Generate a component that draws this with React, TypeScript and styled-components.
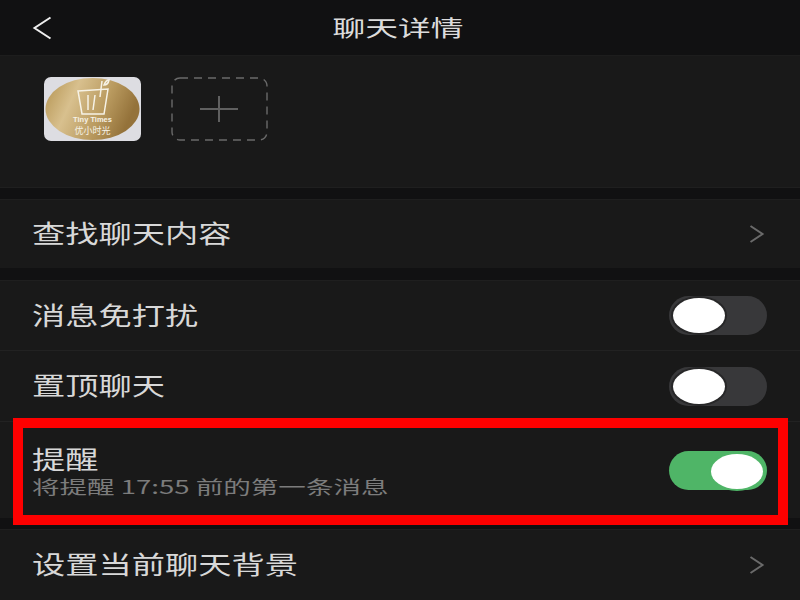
import React from "react";
import styled, { createGlobalStyle } from "styled-components";

const Global = createGlobalStyle`
  html, body { margin: 0; padding: 0; background: #111112; }
  body { font-family: "Liberation Sans", "Noto Sans CJK SC", sans-serif; }
`;

const Page = styled.div`
  position: relative;
  width: 800px;
  height: 600px;
  overflow: hidden;
  background: #111112;
  display: flex;
  flex-direction: column;
`;

const Header = styled.header`
  height: 55px;
  flex: none;
  position: relative;
  display: flex;
  align-items: center;
  justify-content: center;
  border-bottom: 1px solid #1d1d1d;
`;

const BackIcon = styled.svg`
  position: absolute;
  left: 31px;
  top: 15px;
`;

const Title = styled.h1`
  margin: 0 4px 0 0;
  padding-bottom: 3px;
  font: 400 22px "Noto Sans CJK SC", sans-serif;
  color: #dcdcdc;
  transform: scaleX(1.49);
`;

const MembersSection = styled.section`
  height: 132px;
  flex: none;
  background: #191919;
  border-bottom: 1px solid #1f1f1f;
  box-sizing: border-box;
  padding: 21px 0 0 44px;
  display: flex;
  gap: 30px;
  align-items: flex-start;
`;

const Avatar = styled.svg`
  display: block;
  border-radius: 7px;
`;

const Group = styled.section<{ $gap: number }>`
  flex: none;
  margin-top: ${(p) => p.$gap}px;
  background: #191919;
  border-top: 1px solid #1f1f1f;
`;

const Row = styled.div<{ $h: number; $line?: boolean }>`
  height: ${(p) => p.$h}px;
  box-sizing: border-box;
  padding: 0 33px 0 32px;
  display: flex;
  align-items: center;
  justify-content: space-between;
  border-bottom: ${(p) => (p.$line ? "1px solid #222" : "none")};
`;

const TextStack = styled.div`
  display: flex;
  flex-direction: column;
  align-items: flex-start;
`;

const Label = styled.span`
  font: 400 25px/32px "Noto Sans CJK SC", sans-serif;
  padding-bottom: 4px;
  color: #d8d8d8;
  display: inline-block;
  transform: scaleX(1.33);
  transform-origin: left center;
  white-space: nowrap;
`;

const Sub = styled.span`
  font: 400 18px/24px "Noto Sans CJK SC", sans-serif;
  margin-top: -4px;
  color: #7c7c7c;
  display: inline-block;
  transform: scaleX(1.53);
  transform-origin: left center;
  white-space: nowrap;
`;

const Track = styled.div<{ $on?: boolean }>`
  width: 98px;
  height: 39px;
  border-radius: 20px;
  background: ${(p) => (p.$on ? "#4fb567" : "#38383a")};
  position: relative;
`;

const Knob = styled.div<{ $on?: boolean }>`
  position: absolute;
  top: ${(p) => (p.$on ? "3px" : "2px")};
  left: ${(p) => (p.$on ? "42px" : "4px")};
  width: 52px;
  height: 35px;
  border-radius: 50%;
  background: #fff;
  box-shadow: 0 0 0 2px ${(p) => (p.$on ? "#4fb567" : "#272728")};
`;

const Highlight = styled.div`
  position: absolute;
  left: 13px;
  top: 418px;
  width: 775px;
  height: 107px;
  box-sizing: border-box;
  border: 10px solid #fe0000;
  pointer-events: none;
`;

const Chevron = () => (
  <svg width="18" height="20" viewBox="0 0 18 20" fill="none" style={{ marginRight: 1 }}>
    <path d="M2.5 2 L14.5 10 L2.5 18" stroke="#6a6a6a" strokeWidth="2" />
  </svg>
);

const Toggle = ({ on }: { on?: boolean }) => (
  <Track $on={on}>
    <Knob $on={on} />
  </Track>
);

export default function App() {
  return (
    <Page>
      <Global />
      <Header>
        <BackIcon width="24" height="26" viewBox="0 0 24 26" fill="none">
          <path d="M19.5 2.5 L3.5 13 L19.5 23.5" stroke="#eeeeee" strokeWidth="2" />
        </BackIcon>
        <Title>聊天详情</Title>
      </Header>
      <MembersSection>
        <Avatar width="97" height="64" viewBox="0 0 97 64">
          <defs>
            <linearGradient id="gold" x1="0" y1="0" x2="1" y2="0.3">
              <stop offset="0" stopColor="#b3924f" />
              <stop offset="0.35" stopColor="#d8c08e" />
              <stop offset="0.7" stopColor="#b99a5f" />
              <stop offset="1" stopColor="#94723a" />
            </linearGradient>
          </defs>
          <rect width="97" height="64" fill="#dddde2" />
          <ellipse cx="48.5" cy="32" rx="47" ry="31" fill="url(#gold)" />
          <g fill="none" stroke="#f6f2e6" strokeWidth="1.5">
            <path d="M34 14 L64 12 L60 37 L38 37 Z" />
            <path d="M44 18 L44 33 M51 18 L49 33" />
            <path d="M56 20 L58 4" />
            <path d="M60 8 Q62 3 65 3 Q64 8 60 8 Z" />
          </g>
          <text x="48.5" y="45" textAnchor="middle" fontFamily="Liberation Sans" fontSize="7.5" fontWeight="700" fill="#f6f2e6">Tiny Times</text>
          <text x="48.5" y="56.5" textAnchor="middle" fontFamily="Noto Sans CJK SC" fontSize="9" fill="#f6f2e6">优小时光</text>
        </Avatar>
        <svg width="97" height="64" viewBox="0 0 97 64" fill="none">
          <rect x="1" y="1" width="95" height="62" rx="8" stroke="#6a6a6a" strokeWidth="1.4" strokeDasharray="8 6" />
          <path d="M29 32 H67 M48 19 V45" stroke="#606060" strokeWidth="2" />
        </svg>
      </MembersSection>
      <Group $gap={11}>
        <Row $h={68}>
          <Label>查找聊天内容</Label>
          <Chevron />
        </Row>
      </Group>
      <Group $gap={12}>
        <Row $h={70} $line>
          <Label>消息免打扰</Label>
          <Toggle />
        </Row>
        <Row $h={71} $line>
          <Label>置顶聊天</Label>
          <Toggle />
        </Row>
        <Row $h={96}>
          <TextStack>
            <Label>提醒</Label>
            <Sub>将提醒 17:55 前的第一条消息</Sub>
          </TextStack>
          <Toggle on />
        </Row>
      </Group>
      <Group $gap={11}>
        <Row $h={70}>
          <Label>设置当前聊天背景</Label>
          <Chevron />
        </Row>
      </Group>
      <Highlight />
    </Page>
  );
}
